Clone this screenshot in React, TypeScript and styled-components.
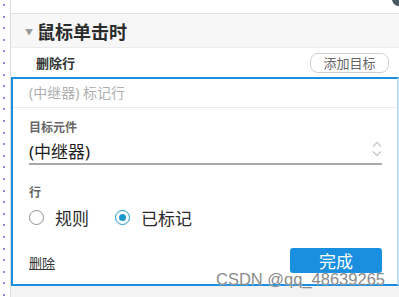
import React from 'react'
import styled,{createGlobalStyle} from 'styled-components'

const GlobalStyle=createGlobalStyle`
html,body{margin:0;padding:0;background:#fff;}
body{font-family:"Noto Sans","Noto Sans CJK SC",sans-serif;}
`

interface IRadioProps{checked?:boolean}

const Radio:React.FC<IRadioProps & {label:string}>=({checked,label})=>(
    <RadioLabel>
        <RadioCircle checked={checked}/>
        <span>{label}</span>
    </RadioLabel>
)

export default function App():React.ReactElement{
    return (
        <Page>
            <GlobalStyle/>
            <Gutter/>
            <Main>
                <TopStrip/>
                <Header>
                    <Caret>▼</Caret>
                    <HeaderTitle>鼠标单击时</HeaderTitle>
                </Header>
                <ActionRow>
                    <ActionName>删除行</ActionName>
                    <GhostButton>添加目标</GhostButton>
                </ActionRow>
                <Panel>
                    <Placeholder>(中继器) 标记行</Placeholder>
                    <PanelBody>
                        <FieldLabel>目标元件</FieldLabel>
                        <SelectBox>
                            <span>(中继器)</span>
                            <svg width="10" height="16" viewBox="0 0 10 16" fill="none" stroke="#c8c8c8" strokeWidth="1.3">
                                <path d="M1 5.5 L5 1.5 L9 5.5"/>
                                <path d="M1 10.5 L5 14.5 L9 10.5"/>
                            </svg>
                        </SelectBox>
                        <FieldLabel $top={19}>行</FieldLabel>
                        <RadioRow>
                            <Radio label="规则"/>
                            <Radio label="已标记" checked/>
                        </RadioRow>
                        <Footer>
                            <DeleteLink>删除</DeleteLink>
                            <PrimaryButton>完成</PrimaryButton>
                        </Footer>
                    </PanelBody>
                    <Watermark>CSDN @qq_48639265</Watermark>
                </Panel>
                <Bottom/>
            </Main>
            <Knob/>
        </Page>
    )
}

const Page=styled.div`
position:relative;
display:flex;
width:399px;
height:297px;
overflow:hidden;
background:#fff;
`

const Gutter=styled.div`
width:10px;
flex:none;
border-right:1px solid #dcdcdc;
background-image:repeating-linear-gradient(to bottom,#8c8ce8 0 2px,transparent 2px 11.6px);
background-size:2px 100%;
background-position:3px 4px;
background-repeat:no-repeat;
`

const Main=styled.div`
flex:1;
display:flex;
flex-direction:column;
min-width:0;
`

const TopStrip=styled.div`
height:13px;
border-bottom:1px solid #e2e2e2;
`

const Header=styled.div`
height:33px;
display:flex;
align-items:center;
padding-left:14px;
background:#f7f7f7;
border-bottom:1px solid #ececec;
`

const Caret=styled.span`
font-size:8px;
color:#9a9a9a;
margin-right:4px;
margin-top:1px;
`

const HeaderTitle=styled.span`
font-size:18px;
font-weight:700;
color:#2b2b2b;
`

const ActionRow=styled.div`
height:29px;
display:flex;
align-items:center;
justify-content:space-between;
padding:0 10px 0 25px;
`

const ActionName=styled.span`
font-size:13px;
font-weight:700;
color:#333;
`

const GhostButton=styled.div`
width:77px;
height:18px;
border:1px solid #cfcfcf;
border-radius:8px;
display:flex;
align-items:center;
justify-content:center;
font-size:13px;
color:#666;
`

const Panel=styled.div`
position:relative;
height:205px;
border:2px solid #1a8fe0;
border-right-color:#bcdff7;
display:flex;
flex-direction:column;
`

const Placeholder=styled.div`
height:26px;
padding-bottom:2px;
display:flex;
align-items:center;
padding-left:16px;
font-size:14px;
color:#b0b0b0;
border-bottom:1px solid #ebebeb;
`

const PanelBody=styled.div`
flex:1;
display:flex;
flex-direction:column;
padding:11px 15px 0 16px;
`

const FieldLabel=styled.div<{$top?:number}>`
font-size:12px;
font-weight:700;
color:#666;
margin-top:${({$top})=>$top??0}px;
line-height:18px;
`

const SelectBox=styled.div`
display:flex;
align-items:center;
justify-content:space-between;
height:26px;
border-bottom:2px solid #a8a8a8;
font-size:17px;
color:#1e1e1e;
svg{margin-top:-2px;}
`

const RadioRow=styled.div`
display:flex;
align-items:center;
gap:26px;
margin-top:3px;
`

const RadioLabel=styled.label`
display:flex;
align-items:center;
gap:11px;
font-size:17px;
color:#2a2a2a;
`

const RadioCircle=styled.span<IRadioProps>`
width:13px;
height:13px;
border-radius:50%;
border:1px solid ${({checked})=>checked?'#1798c8':'#8e8e8e'};
display:inline-flex;
align-items:center;
justify-content:center;
&::after{
    content:'';
    width:7px;
    height:7px;
    border-radius:50%;
    background:${({checked})=>checked?'#1798c8':'transparent'};
}
`

const Footer=styled.div`
display:flex;
align-items:center;
justify-content:space-between;
margin-top:auto;
margin-bottom:11px;
`

const DeleteLink=styled.span`
font-size:13px;
color:#333;
text-decoration:underline;
margin-top:4px;
`

const PrimaryButton=styled.div`
width:92px;
height:25px;
border-radius:3px;
background:#1a8fe0;
color:#fff;
font-size:17px;
display:flex;
align-items:center;
justify-content:center;
`

const Watermark=styled.div`
position:absolute;
right:12px;
bottom:-5px;
font-family:"Liberation Sans",Arial,sans-serif;
font-size:16.5px;
color:#8a8a8a;
text-shadow:0 0 1px #fff;
`

const Bottom=styled.div`
flex:1;
background:#f3f3f3;
`

const Knob=styled.div`
position:absolute;
top:-8px;
right:-6px;
width:13px;
height:14px;
border-radius:50%;
background:#4b5a62;
`
